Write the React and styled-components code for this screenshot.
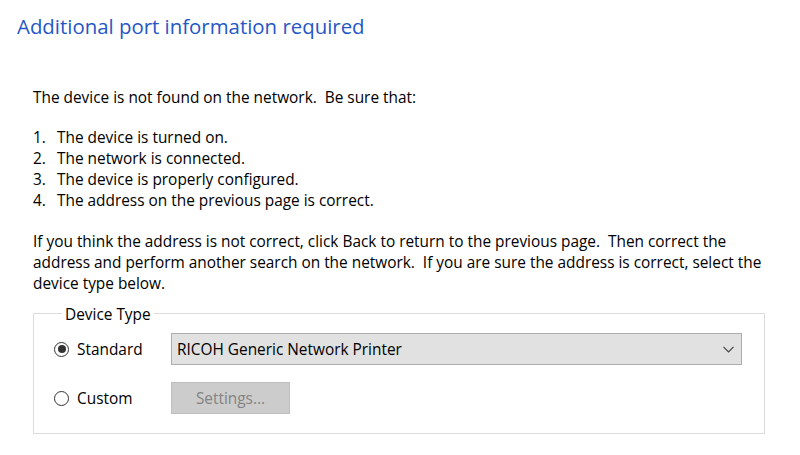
import React, { useState } from 'react'
import styled, { createGlobalStyle } from 'styled-components'

const GlobalStyle = createGlobalStyle`
  html, body {
    margin: 0;
    padding: 0;
    background: #ffffff;
  }
  body {
    font-family: 'Open Sans', 'Noto Sans', sans-serif;
    color: #000000;
  }
`

const Page = styled.div`
  width: 800px;
  height: 455px;
  padding-top: 12px;
  box-sizing: border-box;
  overflow: hidden;
`

const Title = styled.h1`
  margin: 0 0 0 17px;
  font-size: 20.4px;
  line-height: 28px;
  font-weight: 400;
  color: #2457c5;
`

const Body = styled.div`
  padding: 0 35px 0 33px;
  font-size: 15.4px;
  line-height: 21px;
`

const Intro = styled.p`
  margin: 47px 0 0;
`

const Checklist = styled.ol`
  margin: 19px 0 0;
  padding: 0;
  list-style: none;
`

const CheckItem = styled.li`
  display: flex;
  > span.num {
    width: 24px;
    flex-shrink: 0;
  }
`

const Advice = styled.p`
  margin: 20px 0 0;
`

const GroupBox = styled.fieldset`
  margin: 9px 0 0;
  padding: 10px 22px 19px 20px;
  border: 1px solid #dcdcdc;
  display: grid;
  grid-template-columns: 117px 1fr;
  row-gap: 17px;
  align-items: center;
`

const Legend = styled.legend`
  margin-left: 8px;
  padding: 0 3px;
  line-height: 20px;
  transform: translateY(2px);
`

const RadioLabel = styled.label`
  display: flex;
  align-items: center;
  gap: 8px;
  cursor: default;
`

const RadioDot = styled.span`
  width: 15px;
  height: 15px;
  box-sizing: border-box;
  border: 1px solid #333333;
  border-radius: 50%;
  display: flex;
  align-items: center;
  justify-content: center;
  &::after {
    content: '';
    width: 8px;
    height: 8px;
    border-radius: 50%;
    background: #333333;
    display: ${p => (p.$checked ? 'block' : 'none')};
  }
`

const Dropdown = styled.div`
  height: 32px;
  box-sizing: border-box;
  border: 1px solid #adadad;
  background: #e1e1e1;
  display: flex;
  align-items: center;
  justify-content: space-between;
  padding: 0 7px 0 5px;
`

const SettingsButton = styled.button`
  width: 119px;
  height: 32px;
  border: 1px solid #bfbfbf;
  background: #cccccc;
  color: #838383;
  font-family: inherit;
  font-size: 15.4px;
  padding: 0;
  justify-self: start;
`

const Chevron = () => (
  <svg width="11" height="7" viewBox="0 0 11 7">
    <path d="M0.5 0.8 L5.5 5.8 L10.5 0.8" fill="none" stroke="#444" strokeWidth="1.2" />
  </svg>
)

const checks = [
  'The device is turned on.',
  'The network is connected.',
  'The device is properly configured.',
  'The address on the previous page is correct.'
]

export default function App() {
  const [type, setType] = useState('standard')

  return (
    <>
      <GlobalStyle />
      <Page>
        <Title>Additional port information required</Title>
        <Body>
          <Intro>The device is not found on the network.&nbsp; Be sure that:</Intro>
          <Checklist>
            {checks.map((c, i) => (
              <CheckItem key={i}>
                <span className="num">{i + 1}.</span>
                <span>{c}</span>
              </CheckItem>
            ))}
          </Checklist>
          <Advice>
            If you think the address is not correct, click Back to return to the previous page.&nbsp; Then correct the
            address and perform another search on the network.&nbsp; If you are sure the address is correct, select the
            device type below.
          </Advice>
          <GroupBox>
            <Legend>Device Type</Legend>
            <RadioLabel onClick={() => setType('standard')}>
              <RadioDot $checked={type === 'standard'} />
              Standard
            </RadioLabel>
            <Dropdown>
              <span>RICOH Generic Network Printer</span>
              <Chevron />
            </Dropdown>
            <RadioLabel onClick={() => setType('custom')}>
              <RadioDot $checked={type === 'custom'} />
              Custom
            </RadioLabel>
            <SettingsButton disabled={type !== 'custom'}>Settings...</SettingsButton>
          </GroupBox>
        </Body>
      </Page>
    </>
  )
}
